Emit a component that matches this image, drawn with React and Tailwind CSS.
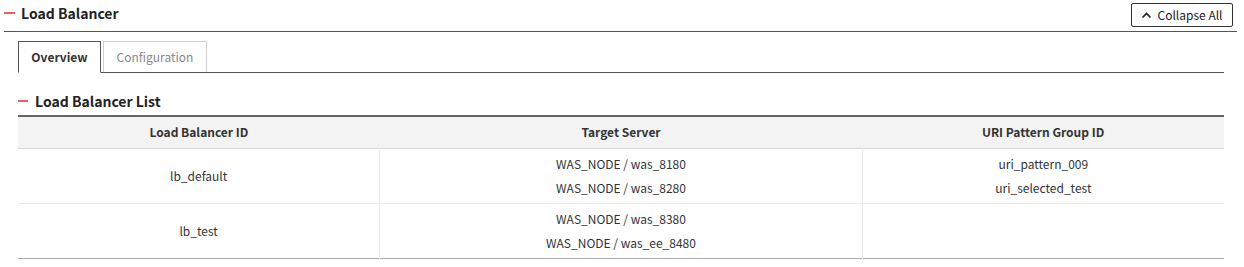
import React from "react";

const font = { fontFamily: '"Noto Sans CJK KR", "Noto Sans", sans-serif' };

function Dash({ w = 11 }) {
  return <span className="inline-block h-[2px] bg-[#e8625f]" style={{ width: w }} />;
}

function Cell({ lines, border }) {
  return (
    <td className={`h-[55px] align-middle text-center text-[12px] text-[#333] ${border ? "border-r border-[#ebebeb]" : ""}`}>
      <div className="flex flex-col items-center">
        {lines.map((l, i) => (
          <div key={i} className="leading-[24px]">{l}</div>
        ))}
      </div>
    </td>
  );
}

export default function App() {
  const rows = [
    { id: "lb_default", targets: ["WAS_NODE / was_8180", "WAS_NODE / was_8280"], uris: ["uri_pattern_009", "uri_selected_test"] },
    { id: "lb_test", targets: ["WAS_NODE / was_8380", "WAS_NODE / was_ee_8480"], uris: [] },
  ];
  return (
    <div className="w-[1244px] h-[267px] bg-white px-[4px] pr-[7px]" style={font}>
      {/* header */}
      <div className="flex items-start justify-between h-[32px] border-b border-[#555]">
        <div className="flex items-center h-[26px] gap-[6px]">
          <Dash w={11} />
          <span className="text-[14px] font-bold text-[#222] leading-[20px]">Load Balancer</span>
        </div>
        <button className="mt-[3px] mr-[4px] h-[24px] w-[102px] flex items-center justify-center gap-[5px] border border-[#333] rounded-[2px] bg-white text-[12px] text-[#222]">
          <svg width="11" height="8" viewBox="0 0 11 8" fill="none">
            <polyline points="1.5,6.5 5.5,2.5 9.5,6.5" stroke="#222" strokeWidth="1.7" />
          </svg>
          <span className="leading-[20px]">Collapse All</span>
        </button>
      </div>

      <div className="pl-[14px] pr-[13px]">
        {/* tabs */}
        <div className="mt-[9px] flex items-end h-[32px] border-b border-[#555]">
          <div className="h-[32px] -mb-px w-[83px] flex items-center justify-center border border-[#555] border-b-white bg-white text-[12px] font-bold text-[#333]">
            Overview
          </div>
          <div className="ml-[2px] h-[31px] w-[104px] flex items-center justify-center border border-b-0 border-[#d0d0d0] text-[12px] text-[#888]">
            Configuration
          </div>
        </div>

        {/* sub header */}
        <div className="mt-[18px] h-[20px] flex items-center gap-[7px]">
          <Dash w={10} />
          <span className="text-[14px] font-bold text-[#222] leading-[20px]">Load Balancer List</span>
        </div>

        <table className="mt-[4px] w-full table-fixed border-collapse border-t-2 border-[#666]">
          <colgroup>
            <col style={{ width: "30%" }} />
            <col style={{ width: "40%" }} />
            <col style={{ width: "30%" }} />
          </colgroup>
          <thead>
            <tr className="bg-[#f3f3f3] border-b border-[#d6d6d6]">
              <th className="h-[32px] text-[12px] font-bold text-[#333] text-center">Load Balancer ID</th>
              <th className="h-[32px] text-[12px] font-bold text-[#333] text-center">Target Server</th>
              <th className="h-[32px] text-[12px] font-bold text-[#333] text-center">URI Pattern Group ID</th>
            </tr>
          </thead>
          <tbody>
            {rows.map((r, i) => (
              <tr key={r.id} className={i === rows.length - 1 ? "border-b border-[#aaa]" : "border-b border-[#ebebeb]"}>
                <Cell lines={[r.id]} border />
                <Cell lines={r.targets} border />
                <Cell lines={r.uris} />
              </tr>
            ))}
          </tbody>
        </table>
      </div>
    </div>
  );
}
